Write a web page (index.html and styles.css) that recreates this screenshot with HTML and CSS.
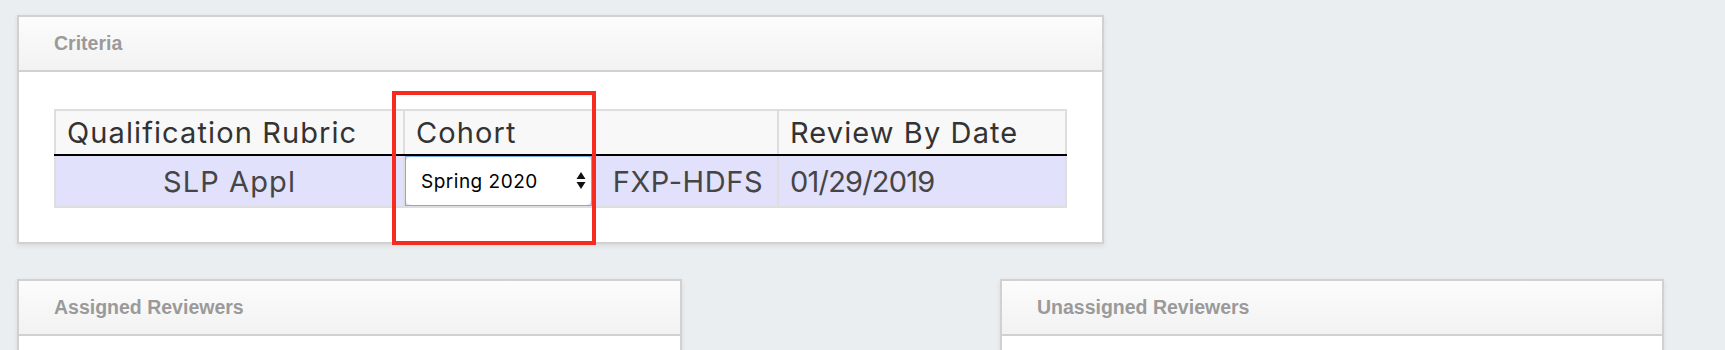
FILE: index.html
```html
<!DOCTYPE html>
<html>
<head>
<meta charset="utf-8">
<title>Criteria</title>
<link rel="stylesheet" href="styles.css">
</head>
<body>
<div class="page">
  <section class="panel criteria">
    <header class="panel-head">Criteria</header>
    <div class="panel-body">
      <table class="grid">
        <colgroup>
          <col class="c1"><col class="c2"><col class="c3"><col class="c4">
        </colgroup>
        <thead>
          <tr>
            <th>Qualification Rubric</th>
            <th>Cohort</th>
            <th></th>
            <th>Review By Date</th>
          </tr>
        </thead>
        <tbody>
          <tr>
            <td class="center">SLP Appl</td>
            <td class="sel-cell">
              <div class="select-wrap">
                <div class="select">
                  <span class="select-text">Spring 2020</span>
                  <svg class="arrows" width="10" height="18" viewBox="0 0 10 18"><path d="M5 0 L9.5 7 L0.5 7 Z" fill="#111"/><path d="M0.5 10 L9.5 10 L5 17 Z" fill="#111"/></svg>
                </div>
              </div>
            </td>
            <td class="center code">FXP-HDFS</td>
            <td class="date">01/29/2019</td>
          </tr>
        </tbody>
      </table>
    </div>
    <div class="highlight"></div>
  </section>

  <div class="pair">
    <section class="panel">
      <header class="panel-head">Assigned Reviewers</header>
      <div class="panel-body empty"></div>
    </section>
    <section class="panel">
      <header class="panel-head">Unassigned Reviewers</header>
      <div class="panel-body empty"></div>
    </section>
  </div>
</div>
</body>
</html>
```

FILE: styles.css
```css
html, body {
  margin: 0;
  padding: 0;
  background: #eaeef0;
  height: 100%;
  overflow: hidden;
}

.page {
  padding: 15px 0 0 17px;
  display: flex;
  flex-direction: column;
  gap: 35px;
}

.panel {
  position: relative;
  background: #fff;
  border: 2px solid #d1d1d1;
  box-shadow: 0 2px 5px rgba(0, 0, 0, 0.08);
  box-sizing: border-box;
}

.criteria {
  width: 1087px;
}

.panel-head {
  height: 53px;
  border-bottom: 2px solid #d1d1d1;
  background: linear-gradient(to bottom, #fcfcfc, #f2f2f2);
  display: flex;
  align-items: center;
  padding-left: 35px;
  font-family: "Liberation Sans", Arial, sans-serif;
  font-weight: 700;
  font-size: 19.5px;
  color: #9a9a9a;
}

.panel-body {
  padding: 37px 38px 34px 35px;
}

.panel-body.empty {
  height: 20px;
  padding: 0;
}

.grid {
  width: 1011px;
  border-collapse: collapse;
  table-layout: fixed;
  font-family: Inter, "Open Sans", sans-serif;
  font-size: 29px;
  letter-spacing: 1.1px;
  border: 2px solid #dedede;
}

.grid .c1 { width: 349px; }
.grid .c2 { width: 189px; }
.grid .c3 { width: 185px; }
.grid .c4 { width: 288px; }

.grid th {
  height: 43px;
  padding: 0 11px;
  background: #f8f8f8;
  border-left: 2px solid #dedede;
  border-bottom: 2px solid #000;
  text-align: left;
  font-weight: 400;
  color: #333;
  white-space: nowrap;
}

.grid td {
  height: 50px;
  padding: 0 11px;
  background: #e1e1fb;
  border-left: 2px solid #dedede;
  color: #454545;
  white-space: nowrap;
}

.grid td.center {
  text-align: center;
}

.grid td.code {
  letter-spacing: 0.6px;
  padding-left: 16px;
}

.grid td.date {
  letter-spacing: -0.8px;
}

.grid td.sel-cell {
  padding: 0;
}

.select-wrap {
  border: 1px solid #7aaee2;
  height: 50px;
  box-sizing: border-box;
}

.select {
  height: 100%;
  background: #fff;
  border-radius: 5px;
  display: flex;
  align-items: center;
  justify-content: space-between;
  padding: 0 5px 0 15px;
  font-size: 19px;
  letter-spacing: 0.5px;
  color: #000;
}

.arrows {
  display: block;
}

.highlight {
  position: absolute;
  left: 373px;
  top: 74px;
  width: 204px;
  height: 154px;
  border: 4px solid #f72c20;
  box-sizing: border-box;
}

.pair {
  display: grid;
  grid-template-columns: 665px 664px;
  column-gap: 318px;
}
```
